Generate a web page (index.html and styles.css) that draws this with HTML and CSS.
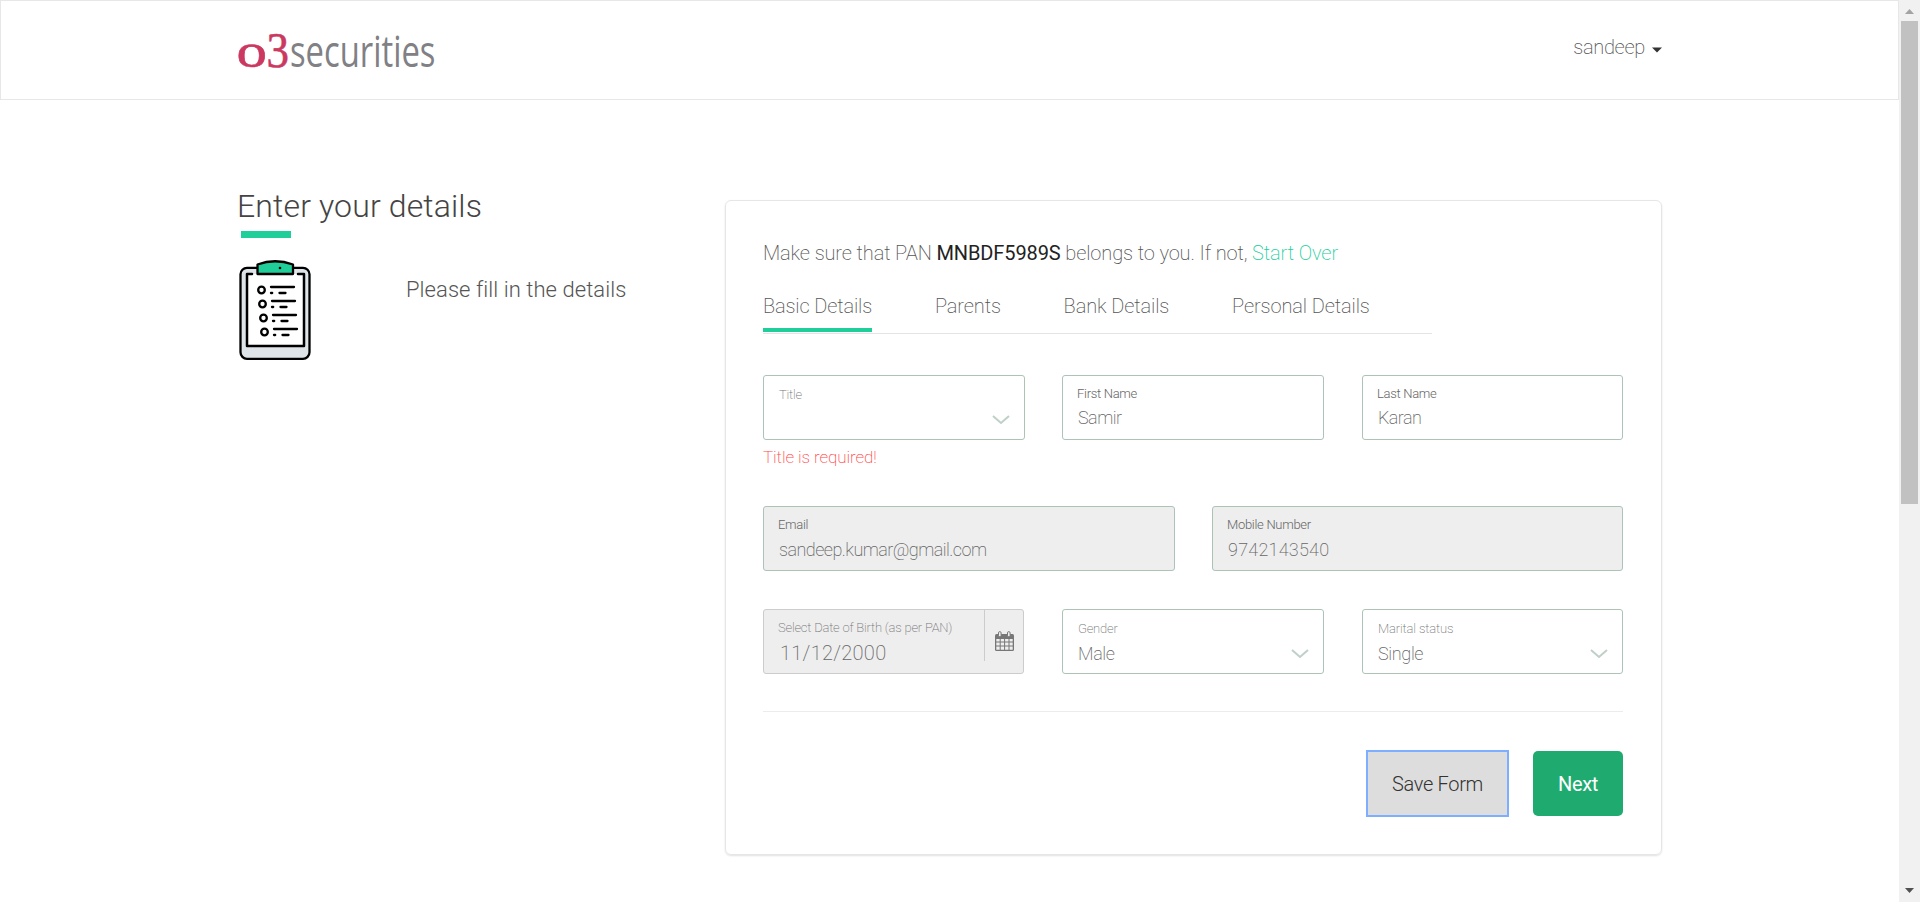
FILE: index.html
```html
<!DOCTYPE html>
<html lang="en">
<head>
<meta charset="utf-8">
<title>o3securities</title>
<link rel="stylesheet" href="styles.css">
</head>
<body>
<div class="page">
  <header class="header">
    <div class="container header-row">
      <svg class="logo" width="200" height="48" viewBox="0 0 200 48">
        <text class="logo-o" transform="translate(-0.5 36.500) scale(1.22 0.96)">o</text>
        <text class="logo-3" transform="translate(29.500 37) scale(0.9 1)">3</text>
        <text class="logo-name" transform="translate(0 37) scale(1 1.07)" x="53" y="0" textLength="145.500" lengthAdjust="spacingAndGlyphs">securities</text>
      </svg>
      <div class="user"><span>sandeep</span><svg width="10" height="6" viewBox="0 0 10 6"><path d="M0 0.5h10L5 5.5z" fill="#333"/></svg></div>
    </div>
  </header>

  <main class="container main">
    <section class="intro">
      <h1>Enter your details</h1>
      <div class="intro-bar"></div>
      <div class="intro-row">
        <svg width="73" height="101" viewBox="0 0 73 101" fill="none" stroke="#000" stroke-linecap="round" stroke-linejoin="round">
          <rect x="1.5" y="7.8" width="69" height="91" rx="6.500" fill="#dfe4e8" stroke-width="2.300"/>
          <path d="M13 14H8v72h57V14H59" fill="#fff" stroke-width="2.500"/>
          <path d="M18.500 14V4.500Q36 -2 54 4.500V14z" fill="#20ce99" stroke-width="2.300"/>
          <circle cx="41" cy="8" r="1.300" fill="#000" stroke="none"/>
          <g stroke-width="2.300">
            <circle cx="22.500" cy="30" r="3.300"/><path d="M32 27H55M32 33h1.200M40.500 33h6"/>
            <circle cx="23.500" cy="44" r="3.300"/><path d="M33 41H56M33 47h1.200M41.500 47h6"/>
            <circle cx="24.500" cy="58" r="3.300"/><path d="M34 55H57M34 61h1.200M42.500 61h6"/>
            <circle cx="25.500" cy="72" r="3.300"/><path d="M35 69H58M35 75h1.200M43.500 75h6"/>
          </g>
        </svg>
        <p>Please fill in the details</p>
      </div>
    </section>

    <section class="card">
      <p class="pan-note">Make sure that PAN <strong>MNBDF5989S</strong> belongs to you. If not, <a class="start-over">Start Over</a></p>
      <nav class="tabs">
        <a class="tab active">Basic Details</a>
        <a class="tab">Parents</a>
        <a class="tab">Bank Details</a>
        <a class="tab">Personal Details</a>
      </nav>

      <div class="row three">
        <div>
          <div class="field select">
            <span class="label light">Title</span>
            <svg class="chevron" width="18" height="10" viewBox="0 0 18 10"><path d="M1 1l8 7 8-7"/></svg>
          </div>
          <p class="error">Title is required!</p>
        </div>
        <div class="field"><span class="label">First Name</span><span class="value tight">Samir</span></div>
        <div class="field"><span class="label">Last Name</span><span class="value tight">Karan</span></div>
      </div>

      <div class="row two">
        <div class="field disabled"><span class="label">Email</span><span class="value tight">sandeep.kumar@gmail.com</span></div>
        <div class="field disabled"><span class="label">Mobile Number</span><span class="value number">9742143540</span></div>
      </div>

      <div class="row three">
        <div class="field disabled date">
          <div class="date-text"><span class="label light">Select Date of Birth (as per PAN)</span><span class="value dob">11/12/2000</span></div>
          <div class="date-button">
            <svg width="19" height="20" viewBox="0 0 19 20">
              <path d="M1.500 3h16q1.500 0 1.500 1.500V18.500q0 1.500-1.500 1.500h-16Q0 20 0 18.500V4.500Q0 3 1.500 3z" fill="#777"/>
              <path d="M1.300 8h3.400v2.600H1.300zM5.700 8h3.400v2.600H5.700zM10.100 8h3.400v2.600h-3.400zM14.500 8h3.200v2.600h-3.200zM1.300 11.600h3.400v2.900H1.300zM5.700 11.600h3.400v2.900H5.700zM10.100 11.600h3.400v2.900h-3.400zM14.500 11.600h3.200v2.900h-3.200zM1.300 15.500h3.400v3.200H1.300zM5.700 15.500h3.400v3.200H5.700zM10.100 15.500h3.400v3.200h-3.400zM14.500 15.500h3.200v3.200h-3.200z" fill="#eee"/>
              <rect x="3.500" y="0.600" width="2.600" height="5.200" rx="1.300" fill="#eee" stroke="#777"/>
              <rect x="12.500" y="0.600" width="2.600" height="5.200" rx="1.300" fill="#eee" stroke="#777"/>
            </svg>
          </div>
        </div>
        <div class="field select">
          <span class="label light">Gender</span><span class="value">Male</span>
          <svg class="chevron" width="18" height="10" viewBox="0 0 18 10"><path d="M1 1l8 7 8-7"/></svg>
        </div>
        <div class="field select">
          <span class="label light marital">Marital status</span><span class="value">Single</span>
          <svg class="chevron" width="18" height="10" viewBox="0 0 18 10"><path d="M1 1l8 7 8-7"/></svg>
        </div>
      </div>

      <div class="actions">
        <button class="btn save">Save Form</button>
        <button class="btn next">Next</button>
      </div>
    </section>
  </main>
</div>
<div class="scrollbar">
  <svg width="21" height="21" viewBox="0 0 21 21"><path d="M6 14l4.500-5 4.500 5z" fill="#a3a3a3"/></svg>
  <div class="thumb"></div>
  <svg width="21" height="21" viewBox="0 0 21 21"><path d="M6 7l4.500 5 4.500-5z" fill="#505050"/></svg>
</div>
</body>
</html>
```
FILE: styles.css
```css
* { box-sizing: border-box; }
body {
  margin: 0;
  height: 902px;
  overflow: hidden;
  display: flex;
  background: #fff;
  color: #555;
  font-family: Roboto, "Open Sans", sans-serif;
  font-weight: 200;
}
h1, p { margin: 0; }
.page { flex: 1; height: 902px; overflow: hidden; }
.container { width: 1425px; margin-left: 237px; display: flex; }

.header { height: 100px; border: 1px solid #e7e7e7; }
.header .container { margin-left: 236px; }
.header-row { justify-content: space-between; }
.logo { margin-top: 29px; overflow: visible; }
.logo-o, .logo-3 { font: 50px "Liberation Serif", serif; fill: #cb3860; stroke: #cb3860; stroke-width: 0.6px; }
.logo-name { font: 400 41px "Open Sans", sans-serif; fill: #808085; }
.user {
  display: flex;
  align-items: center;
  gap: 7px;
  height: 30px;
  margin-top: 31px;
  font-size: 20px;
  letter-spacing: -0.33px;
}
.user svg { margin-top: 5px; }

.main { align-items: flex-start; }
.intro { width: 488px; padding-top: 86px; }
.intro h1 {
  font-size: 32px;
  line-height: 40px;
  font-weight: 300;
  color: #444;
  letter-spacing: 0.13px;
}
.intro-bar { width: 50px; height: 7px; margin: 5px 0 0 4px; background: #20ce99; }
.intro-row { display: flex; margin-top: 22px; padding-left: 2px; }
.intro-row p {
  margin: 15px 0 0 94px;
  font-size: 22px;
  line-height: 30px;
  font-weight: 300;
  letter-spacing: 0.06px;
}

.card {
  width: 937px;
  height: 655px;
  margin-top: 100px;
  padding: 37px 38px 0 37px;
  border: 1px solid #e6e6e6;
  border-radius: 6px;
  box-shadow: 0 1px 2px rgba(0, 0, 0, 0.12);
}
.pan-note { font-size: 20px; line-height: 30px; letter-spacing: -0.12px; white-space: nowrap; }
.pan-note strong { font-weight: 400; color: #222; letter-spacing: -0.12px; }
.start-over { color: #20ce99; letter-spacing: -0.1px; }

.tabs { display: flex; gap: 62.800px; width: 669px; margin-top: 23px; border-bottom: 1px solid #e4e4e4; }
.tab {
  height: 42px;
  font-size: 20px;
  line-height: 30px;
  letter-spacing: -0.11px;
  white-space: nowrap;
}
.tab.active { height: 41px; border-bottom: 4px solid #20ce99; margin-bottom: 1px; letter-spacing: -0.14px; }

.row { display: grid; margin-top: 38px; }
.three { grid-template-columns: 299px 300px 261px; }
.three > * { width: 262px; }
.three > :last-child { width: 261px; }
.two { grid-template-columns: 412px 411px; column-gap: 37px; margin-top: 37px; }
.tabs + .row { margin-top: 41px; }
.field {
  position: relative;
  height: 65px;
  padding: 10px 15px 0 14px;
  border: 1px solid #adc3b6;
  border-radius: 3px;
}
.field.disabled { background: #eee; }
.label { display: block; font-size: 13px; line-height: 16px; font-weight: 300; color: #666; letter-spacing: -0.3px; }
.label.light { font-weight: 200; color: #777; letter-spacing: -0.21px; }
.label.marital { letter-spacing: -0.15px; }
.value { display: block; margin: 5px 0 0 1px; font-size: 18px; line-height: 24px; color: #666; letter-spacing: -0.35px; }
.value.tight { margin-top: 4px; letter-spacing: -0.54px; }
.value.number { letter-spacing: 0.23px; }
.value.dob { font-size: 20px; letter-spacing: 0.29px; }
.select { padding: 11px 15px 0; }
.select .value { margin-left: 0; }
.disabled .value.tight { margin-top: 5px; }
.chevron { position: absolute; right: 14px; bottom: 14px; fill: none; stroke: #bfd0c7; stroke-width: 2; }
.error { margin-top: 5px; height: 24px; font-size: 17px; line-height: 24px; color: #ff4a4a; letter-spacing: -0.1px; }

.three > .date { display: flex; padding: 0; border-color: #ccc; width: 261px; }
.date-text { width: 221px; height: 51px; padding: 10px 0 0 14px; border-right: 1px solid #ccc; white-space: nowrap; }
.date-text .value { margin-left: 2px; }
.date-button { flex: 1; padding: 21px 0 0 10px; }

.actions { display: flex; justify-content: flex-end; gap: 25px; margin-top: 37px; padding-top: 39px; border-top: 1px solid #ececec; }
.btn {
  height: 65px;
  padding: 0;
  border: 0;
  border-radius: 5px;
  font-family: inherit;
  font-size: 20px;
}
.save {
  width: 141px;
  border-radius: 0;
  background: #ddd;
  color: #333;
  font-weight: 300;
  letter-spacing: -0.32px;
  outline: 2px solid #7eaeff;
  outline-offset: -1px;
}
.next { width: 90px; background: #1fab70; color: #fff; font-weight: 400; letter-spacing: -0.33px; }

.scrollbar { width: 21px; height: 902px; display: flex; flex-direction: column; background: #f1f1f1; }
.scrollbar svg { display: block; }
.thumb { width: 17px; height: 483px; margin: 0 0 377px 2px; background: #c1c1c1; }
```
